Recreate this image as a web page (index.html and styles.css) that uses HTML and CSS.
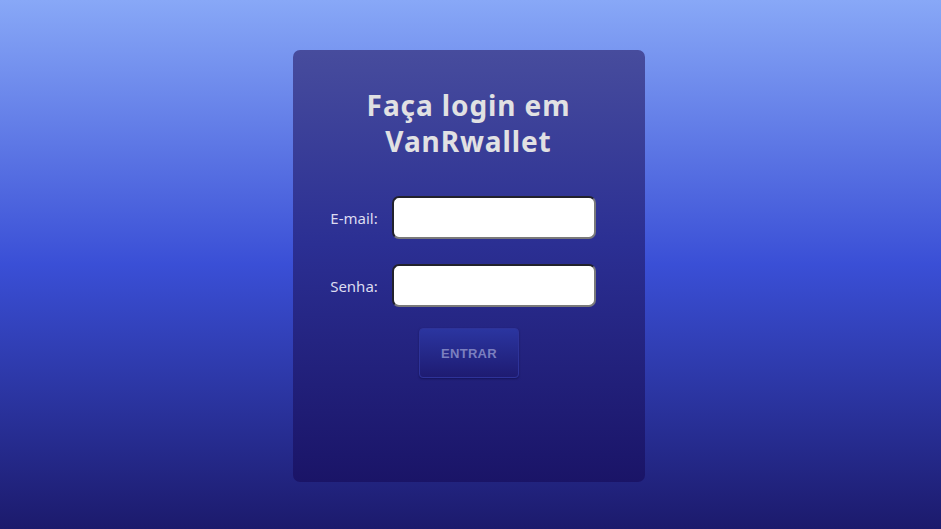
FILE: index.html
```html
<!DOCTYPE html>
<html lang="pt">
<head>
<meta charset="utf-8">
<title>VanRwallet - Login</title>
<link rel="stylesheet" href="styles.css">
</head>
<body>
<main class="page">
  <form class="card">
    <h1 class="title">Faça login em<br>VanRwallet</h1>
    <div class="field">
      <label class="label" for="email">E-mail:</label>
      <input class="input" id="email" type="email">
    </div>
    <div class="field">
      <label class="label" for="senha">Senha:</label>
      <input class="input" id="senha" type="password">
    </div>
    <button class="btn" type="button">ENTRAR</button>
  </form>
</main>
</body>
</html>
```
FILE: styles.css
```css
html, body {
  margin: 0;
  padding: 0;
  height: 100%;
}
body {
  background: linear-gradient(to bottom, #88a8f7 0%, #3a4fd6 50%, #1c1a6c 100%);
  font-family: "Noto Sans", "DejaVu Sans", sans-serif;
}
.page {
  height: 529px;
  display: flex;
  align-items: center;
  justify-content: center;
}
.card {
  box-sizing: border-box;
  width: 352px;
  height: 432px;
  margin-top: 3px;
  margin-right: 4px;
  border-radius: 7px;
  background: linear-gradient(to bottom, #474c9d 0%, #2b2f93 45%, #1a1467 100%);
  display: flex;
  flex-direction: column;
  align-items: center;
  padding-top: 37px;
}
.title {
  margin: 0 0 37px;
  font-size: 28px;
  line-height: 36px;
  font-weight: 700;
  color: #e1e1e3;
  text-align: center;
  letter-spacing: 0.9px;
}
.field {
  display: flex;
  align-items: center;
  gap: 14px;
  margin-bottom: 25px;
  margin-right: 11px;
}
.label {
  font-size: 15px;
  color: #dcdcf0;
}
.input {
  box-sizing: border-box;
  width: 204px;
  height: 43px;
  border: 2px solid #6a6a6a;
  border-top-color: #22222c;
  border-left-color: #22222c;
  border-right-color: #7a7a7a;
  border-bottom-color: #7a7a7a;
  border-radius: 7px;
  background: #ffffff;
  outline: none;
}
.btn {
  box-sizing: border-box;
  width: 100px;
  height: 50px;
  margin-top: -4px;
  margin-left: 1px;
  border: 1px solid #2e3399;
  border-radius: 4px;
  background: linear-gradient(to bottom, #2b35a0 0%, #1e1b72 100%);
  box-shadow: 0 1px 2px rgba(10, 10, 60, 0.5);
  color: #7b7fbf;
  font-family: "Liberation Sans", Arial, sans-serif;
  font-weight: 700;
  font-size: 13px;
  letter-spacing: 0.3px;
}
```
